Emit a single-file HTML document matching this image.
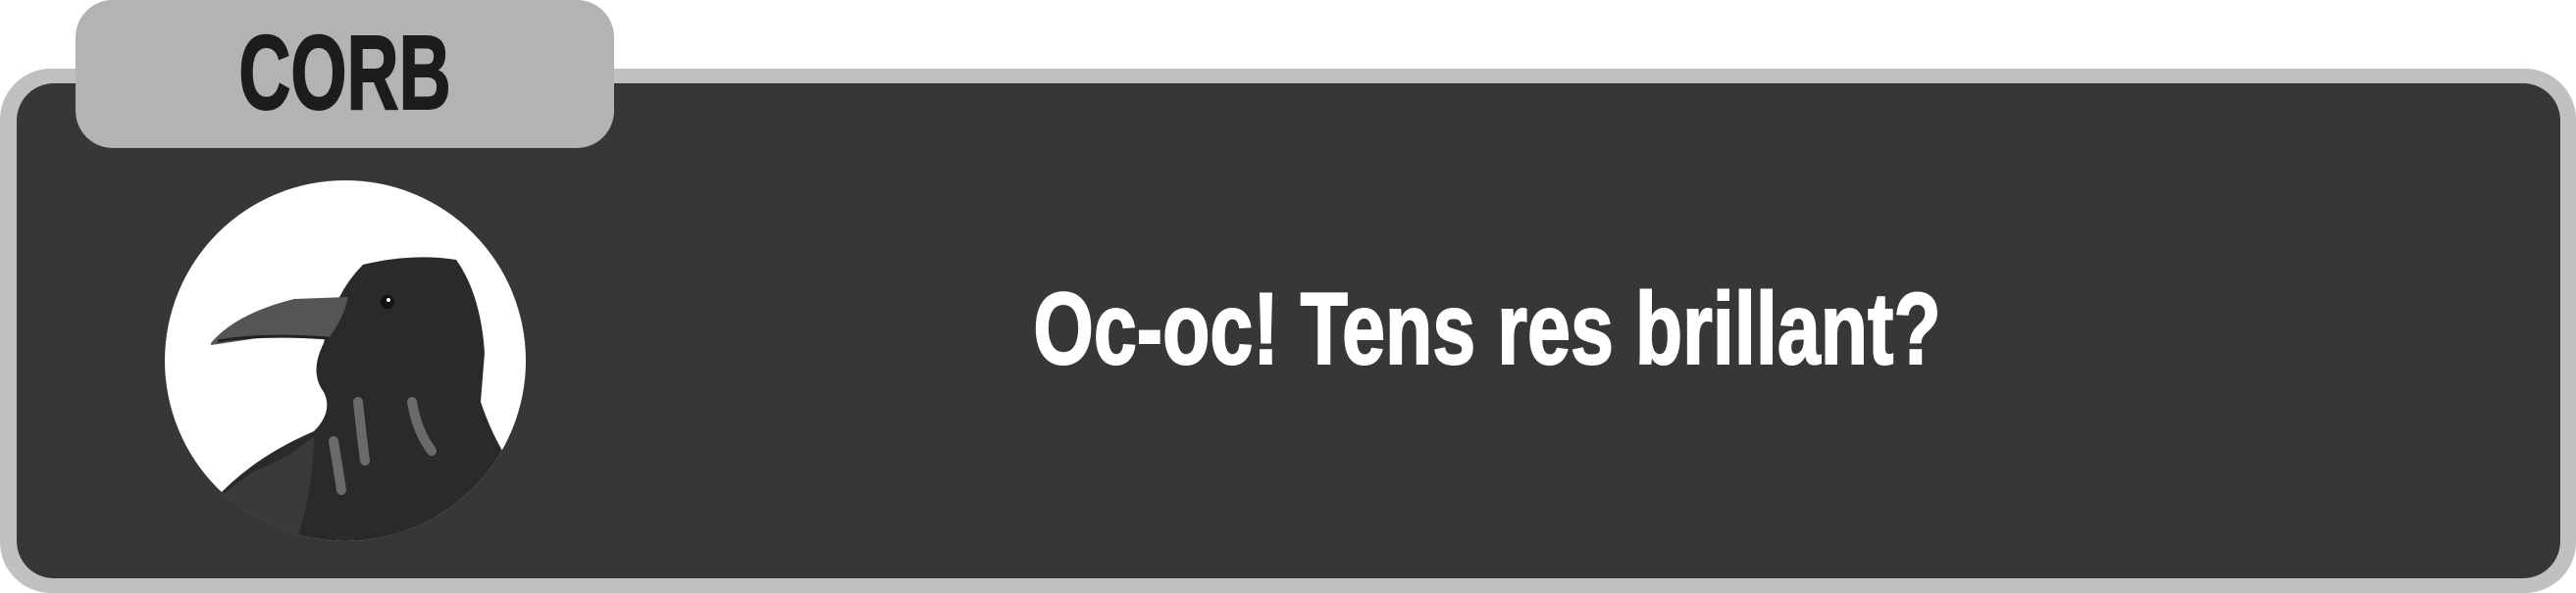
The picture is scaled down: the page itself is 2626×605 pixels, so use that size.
<!DOCTYPE html>
<html><head><meta charset="utf-8"><style>
html,body{margin:0;padding:0;background:#fff;width:2626px;height:605px;overflow:hidden;position:relative;font-family:"Liberation Sans",sans-serif}
.outer{position:absolute;left:0;top:70px;width:2626px;height:535px;background:#c0c0c0;border-radius:52px}
.inner{position:absolute;left:17px;top:85px;width:2593px;height:505px;background:#373737;border-radius:38px}
.tab{position:absolute;left:77px;top:0;width:549px;height:151px;background:#b3b3b3;border-radius:38px}
.tabt{position:absolute;left:77px;top:20px;width:549px;text-align:center;font-weight:bold;font-size:108px;line-height:108px;color:#1c1c1c;transform:scaleX(0.68);transform-origin:center;-webkit-text-stroke:2px #1c1c1c}
.msg{position:absolute;left:816px;width:1400px;top:281px;text-align:center;font-weight:bold;font-size:104px;line-height:110px;color:#fff;transform:scaleX(0.76);transform-origin:center;white-space:nowrap;-webkit-text-stroke:2px #fff}
svg{position:absolute;left:0;top:0}
</style></head><body>
<div class="outer"></div>
<div class="inner"></div>
<div class="tab"></div>
<div class="tabt">CORB</div>
<svg width="700" height="605" viewBox="0 0 700 605">
<defs><clipPath id="c"><circle cx="352" cy="368" r="184"/></clipPath></defs>
<circle cx="352" cy="368" r="184" fill="#fff"/>
<g clip-path="url(#c)">
<path d="M200 560 L210 520 Q250 470 320 440 Q340 420 330 400 Q315 380 330 350 Q340 300 370 270 Q420 258 465 265 Q490 300 494 360 L490 410 Q500 440 515 465 L520 560 Z" fill="#2a2a2a"/>
<path d="M320 445 Q290 470 260 480 Q230 500 205 525 L200 560 L300 560 Q320 500 320 445Z" fill="#3a3a3a"/>
<path d="M215 350 Q240 320 300 305 L355 303 Q350 325 335 345 Q300 342 262 345 Q230 350 215 352Z" fill="#555"/>
<path d="M222 348 Q270 340 335 345" stroke="#222" stroke-width="3" fill="none"/>
<circle cx="395" cy="308" r="7" fill="#111"/>
<circle cx="396" cy="306" r="2" fill="#fff"/>
<path d="M365 410 Q368 440 372 470 M420 410 Q425 440 440 460 M340 450 Q345 480 348 500" stroke="#6a6a6a" stroke-width="10" fill="none" stroke-linecap="round"/>
</g>
</svg>
<div class="msg">Oc-oc! Tens res brillant?</div>
</body></html>
